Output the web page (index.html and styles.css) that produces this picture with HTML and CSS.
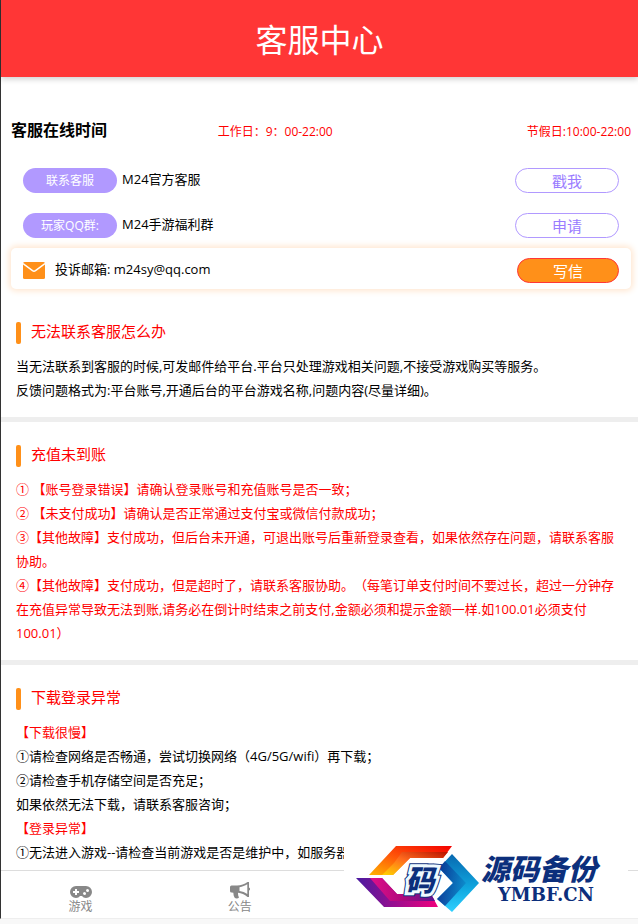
FILE: index.html
```html
<!DOCTYPE html>
<html lang="zh-CN">
<head>
<meta charset="utf-8">
<meta name="viewport" content="width=device-width, initial-scale=1">
<title>客服中心</title>
<link rel="stylesheet" href="styles.css">
</head>
<body>
<div class="app">
  <header class="topbar"><h1>客服中心</h1></header>
  <main class="content">
    <section class="hours">
      <h2>客服在线时间</h2>
      <span>工作日：9：00-22:00</span>
      <span class="holiday">节假日:10:00-22:00</span>
    </section>
    <section class="contacts">
      <div class="contact">
        <span class="pill">联系客服</span>
        <span class="name">M24官方客服</span>
        <button class="action" type="button">戳我</button>
      </div>
      <div class="contact">
        <span class="pill">玩家QQ群:</span>
        <span class="name">M24手游福利群</span>
        <button class="action" type="button">申请</button>
      </div>
      <div class="contact card">
        <svg class="mail" viewBox="0 0 22 17" aria-hidden="true">
          <rect width="22" height="17" rx="1.5" fill="#ff9019"/>
          <path d="M0 1.500 9.500 8.700Q11 9.700 12.500 8.700L22 1.500" fill="none" stroke="#fff" stroke-width="1.500"/>
        </svg>
        <span class="name">投诉邮箱: m24sy@qq.com</span>
        <button class="action primary" type="button">写信</button>
      </div>
    </section>
    <section class="faq">
      <h3>无法联系客服怎么办</h3>
      <p>当无法联系到客服的时候,可发邮件给平台.平台只处理游戏相关问题,不接受游戏购买等服务。</p>
      <p>反馈问题格式为:平台账号,开通后台的平台游戏名称,问题内容(尽量详细)。</p>
    </section>
    <section class="faq">
      <h3>充值未到账</h3>
      <p class="red">① 【账号登录错误】请确认登录账号和充值账号是否一致；</p>
      <p class="red">② 【未支付成功】请确认是否正常通过支付宝或微信付款成功；</p>
      <p class="red">③【其他故障】支付成功，但后台未开通，可退出账号后重新登录查看，如果依然存在问题，请联系客服协助。</p>
      <p class="red">④【其他故障】支付成功，但是超时了，请联系客服协助。（每笔订单支付时间不要过长，超过一分钟存在充值异常导致无法到账,请务必在倒计时结束之前支付,金额必须和提示金额一样.如100.01必须支付100.01）</p>
    </section>
    <section class="faq">
      <h3>下载登录异常</h3>
      <p class="red">【下载很慢】</p>
      <p>①请检查网络是否畅通，尝试切换网络（4G/5G/wifi）再下载；</p>
      <p>②请检查手机存储空间是否充足；</p>
      <p>如果依然无法下载，请联系客服咨询；</p>
      <p class="red">【登录异常】</p>
      <p>①无法进入游戏--请检查当前游戏是否是维护中，如服务器</p>
    </section>
  </main>
  <nav class="tabs">
    <a href="#games">
      <svg viewBox="0 0 22 14" width="22" height="14" aria-hidden="true">
        <path fill="#888" fill-rule="evenodd" d="M6 1h10a6 6 0 0 1 0 12c-2 0-3-1-4-2h-2c-1 1-2 2-4 2A6 6 0 0 1 6 1ZM5 4v2H3v2h2v2h2V8h2V6H7V4ZM14.500 7a1.500 1.500 0 1 0 .01 3 1.500 1.500 0 0 0 0-3ZM17.500 4a1.500 1.500 0 1 0 .01 3 1.500 1.500 0 0 0 0-3Z"/>
      </svg>
      <span>游戏</span>
    </a>
    <a href="#notice">
      <svg viewBox="0 0 20 17" width="20" height="17" aria-hidden="true">
        <path fill="#888" fill-rule="evenodd" d="M17.500 0H19v5.500a1.600 1.600 0 0 1 0 3V15h-1.500c-3-2.500-6-4-9.500-4.200 0 2 .2 3 1 4.700-1 1.300-3.500 1.300-4.500 0C3.700 14 3.300 12.500 3.400 10.800H2.500V10.500H1.500A1.500 1.500 0 0 1 0 9V5a1.500 1.500 0 0 1 1.500-1.500H7C11 3.500 14.500 2 17.500 0ZM17.300 2.300C15 3.700 12.500 4.700 9.500 5.200v3.900c3 .4 5.500 1.500 7.800 3Z"/>
      </svg>
      <span>公告</span>
    </a>
  </nav>
  <aside class="brand">
    <svg class="logo" viewBox="0 0 123 70" aria-hidden="true">
      <defs>
        <linearGradient id="warm" x1="0" y1="1" x2="1" y2="0"><stop offset="0" stop-color="#ffb400"/><stop offset=".45" stop-color="#ff5a0a"/><stop offset="1" stop-color="#f40000"/></linearGradient>
        <linearGradient id="warmIn" x1="0" y1="1" x2="1" y2="0"><stop offset="0" stop-color="#ffd400"/><stop offset=".5" stop-color="#ff6a1e"/><stop offset="1" stop-color="#b81200"/></linearGradient>
        <linearGradient id="plum"><stop offset="0" stop-color="#4a1ba0"/><stop offset="1" stop-color="#f0007c"/></linearGradient>
        <linearGradient id="plumIn"><stop offset="0" stop-color="#e0108a"/><stop offset=".5" stop-color="#b0087c"/><stop offset="1" stop-color="#5a1590"/></linearGradient>
        <linearGradient id="sea" x1="0" y1="0" x2="0" y2="1"><stop offset="0" stop-color="#0868b0"/><stop offset=".6" stop-color="#10a8e0"/><stop offset="1" stop-color="#30d0ff"/></linearGradient>
        <linearGradient id="seaIn" x1="0" y1="0" x2="1" y2="0"><stop offset="0" stop-color="#081880"/><stop offset="1" stop-color="#0c86c8"/></linearGradient>
      </defs>
      <path fill="url(#warm)" d="M40 1H96L87 13H54L37 30H13Z"/>
      <path fill="url(#warmIn)" d="M46 7H92L87 13H54L37 30H26L38 18Z"/>
      <path fill="url(#plum)" d="M0 33H26L41 49H75L82 62H28Z"/>
      <path fill="url(#plumIn)" d="M14 33H26L41 49H75L79 56H34Z"/>
      <path fill="url(#sea)" d="M96 9 123 38 96 67 81 54 97 38 83 23Z"/>
      <path fill="url(#seaIn)" d="M89 16 110 38 89 61 81 54 97 38 83 23Z" opacity=".75"/>
      <text class="glyph halo" x="64" y="46" text-anchor="middle">码</text>
      <text class="glyph rim" x="64" y="46" text-anchor="middle">码</text>
      <text class="glyph" x="64" y="46" text-anchor="middle">码</text>
    </svg>
    <div class="brand-text">
      <strong>源码备份</strong>
      <span>YMBF.CN</span>
    </div>
  </aside>
</div>
</body>
</html>
```
FILE: styles.css
```css
* { box-sizing: border-box; }

body {
  margin: 0;
  background: #f8f8f8;
  color: #000;
  font: 13px/24px "Open Sans", "Noto Sans CJK SC", sans-serif;
  text-spacing-trim: space-all;
}

h1, h2, h3, p { margin: 0; }

.app {
  position: relative;
  display: flex;
  flex-direction: column;
  height: calc(100vh - 5px);
  border-left: 1px solid #333;
  border-bottom: 1px solid #eee;
  background: #fff;
}

.topbar {
  flex: none;
  padding: 16px 0 13px;
  background: #ff3636;
  box-shadow: 0 2px 6px rgba(0, 0, 0, .2);
  color: #fff;
  text-align: center;
}

.topbar h1 {
  font-size: 32px;
  font-weight: 400;
  line-height: 48px;
}

.content {
  flex: 1;
  min-height: 0;
  margin-top: 6px;
  padding-top: 35px;
  overflow: hidden;
}

.hours {
  display: grid;
  grid-template-columns: repeat(3, 1fr);
  align-items: baseline;
  padding: 0 7px 0 10px;
  color: #f00;
  font-size: 12px;
}

.hours h2 {
  color: #000;
  font-size: 16px;
  font-weight: 700;
}

.holiday { text-align: right; }

.contacts {
  display: grid;
  gap: 4px;
  padding: 14px 7px 0 10px;
}

.contact {
  display: flex;
  align-items: flex-start;
  padding: 10px 12px 6px;
}

.name { line-height: 22px; }

.card {
  border-radius: 5px;
  box-shadow: 0 0 6px 2px #ffe6d0;
}

.pill {
  width: 94px;
  margin-right: 5px;
  border-radius: 13px;
  background: #b199ff;
  color: #fff;
  font-size: 12px;
  line-height: 25px;
  text-align: center;
}

.mail {
  width: 22px;
  height: 17px;
  margin: 4px 10px 0 0;
}

.action {
  width: 104px;
  height: 25px;
  margin-left: auto;
  padding: 0;
  border: 1px solid #b199ff;
  border-radius: 13px;
  background: #fff;
  color: #9a7cff;
  font: inherit;
  font-size: 15px;
}

.primary {
  width: 102px;
  border-color: #ff3636;
  background: #ff9019;
  color: #fff;
}

.faq {
  padding: 23px 15px 15px;
  border-bottom: 5px solid #eee;
}

.contacts + .faq { padding-top: 33px; }

.faq h3 {
  display: flex;
  gap: 10px;
  margin-bottom: 10px;
  color: #f00;
  font-size: 15px;
  font-weight: 400;
  line-height: 18px;
}

.faq h3::before {
  content: "";
  width: 5px;
  height: 22px;
  border-radius: 2px;
  background: #ff9019;
}

.red { color: #f00; }

.tabs {
  display: grid;
  flex: none;
  grid-template-columns: repeat(4, 1fr);
  height: 48px;
  border-top: 1px solid #ddd;
}

.tabs a {
  display: flex;
  flex-direction: column;
  align-items: center;
  justify-content: flex-end;
  padding-bottom: 3px;
  color: #888;
  font-size: 12px;
  line-height: 16px;
  text-decoration: none;
}

.brand {
  position: absolute;
  right: 10px;
  bottom: 0;
  display: flex;
  gap: 2px;
  width: 284px;
  height: 78px;
  padding: 5px 0 0 12px;
  background: #fff;
}

.logo {
  flex: none;
  width: 123px;
  height: 70px;
}

.glyph {
  fill: #0c2f7c;
  font: italic 900 29px "Noto Sans CJK SC", sans-serif;
}

.halo {
  stroke: #0c2f7c;
  stroke-width: 8px;
}

.rim {
  fill: #fff;
  stroke: #eefaff;
  stroke-width: 6px;
}

.brand-text {
  display: flex;
  flex-direction: column;
  align-items: center;
  padding-top: 10px;
  color: #0c2f7c;
}

.brand-text strong {
  font: italic 900 29px/24px "Noto Sans CJK SC", sans-serif;
}

.brand-text span {
  margin: 5px 0 0 14px;
  font: 700 18px/22px "DejaVu Serif", serif;
}
```
